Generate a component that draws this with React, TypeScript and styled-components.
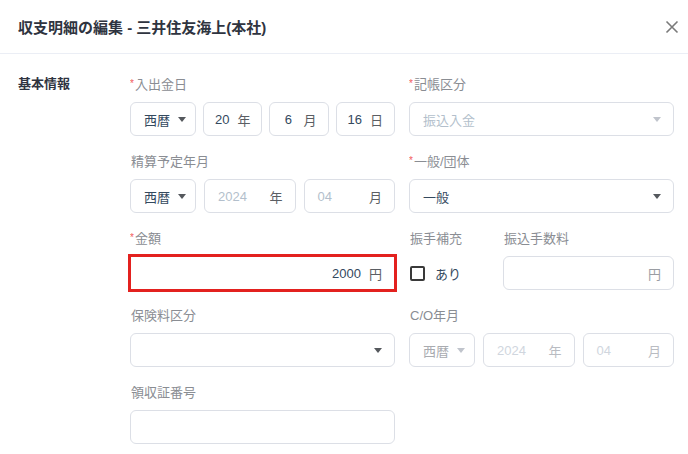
import styled, { createGlobalStyle } from "styled-components";

const GlobalStyle = createGlobalStyle`
  body {
    margin: 0;
    background: #ffffff;
    font-family: "Liberation Sans", "Noto Sans CJK JP", sans-serif;
  }
`;

const App = () => {
  return (
    <Modal>
      <GlobalStyle />
      <Header>
        <h1>収支明細の編集 - 三井住友海上(本社)</h1>
        <Close aria-label="close">
          <svg width="14" height="14" viewBox="0 0 14 14">
            <path d="M1.5 1.5 L12.5 12.5 M12.5 1.5 L1.5 12.5" stroke="#7a7a7a" strokeWidth="1.6" />
          </svg>
        </Close>
      </Header>
      <Body>
        <SectionTitle>基本情報</SectionTitle>
        <Form>
          <Field>
            <Label required>入出金日</Label>
            <DateRow>
              <Select>
                <Value>西暦</Value>
                <Caret />
              </Select>
              <Box centered>
                <Num>20</Num>
                <Unit>年</Unit>
              </Box>
              <Box centered>
                <Num>6</Num>
                <Unit>月</Unit>
              </Box>
              <Box centered>
                <Num>16</Num>
                <Unit>日</Unit>
              </Box>
            </DateRow>
          </Field>
          <Field>
            <Label required>記帳区分</Label>
            <Select disabled>
              <Value placeholder>振込入金</Value>
              <Caret disabled />
            </Select>
          </Field>

          <Field>
            <Label>精算予定年月</Label>
            <MonthRow>
              <Select>
                <Value>西暦</Value>
                <Caret />
              </Select>
              <Box>
                <Value placeholder>2024</Value>
                <Unit>年</Unit>
              </Box>
              <Box>
                <Value placeholder>04</Value>
                <Unit>月</Unit>
              </Box>
            </MonthRow>
          </Field>
          <Field>
            <Label required>一般/団体</Label>
            <Select>
              <Value>一般</Value>
              <Caret />
            </Select>
          </Field>

          <Field>
            <Label required>金額</Label>
            <Box highlight align="end">
              <Num>2000</Num>
              <Unit>円</Unit>
            </Box>
          </Field>
          <SplitRow>
            <Field>
              <Label>振手補充</Label>
              <CheckRow>
                <CheckBox />
                <span>あり</span>
              </CheckRow>
            </Field>
            <Field>
              <Label>振込手数料</Label>
              <Box align="end">
                <Unit muted>円</Unit>
              </Box>
            </Field>
          </SplitRow>

          <Field>
            <Label>保険料区分</Label>
            <Select>
              <Value />
              <Caret />
            </Select>
          </Field>
          <Field>
            <Label>C/O年月</Label>
            <MonthRow>
              <Select disabled>
                <Value disabled>西暦</Value>
                <Caret disabled />
              </Select>
              <Box>
                <Value disabled placeholder>2024</Value>
                <Unit disabled>年</Unit>
              </Box>
              <Box>
                <Value disabled placeholder>04</Value>
                <Unit disabled>月</Unit>
              </Box>
            </MonthRow>
          </Field>

          <Field>
            <Label>領収証番号</Label>
            <Box />
          </Field>
        </Form>
      </Body>
    </Modal>
  );
};

const Modal = styled.div`
  width: 688px;
  height: 454px;
  background: #ffffff;
  overflow: hidden;
`;

const Header = styled.div`
  height: 54px;
  display: flex;
  align-items: center;
  justify-content: space-between;
  padding: 0 9px 0 18px;
  border-bottom: 1px solid #ebeef5;
  box-sizing: border-box;

  h1 {
    margin: 0;
    font-size: 15px;
    font-weight: 700;
    color: #2f3440;
  }
`;

const Close = styled.button`
  border: none;
  background: none;
  padding: 0;
  width: 14px;
  height: 14px;
  display: flex;
  cursor: pointer;
`;

const Body = styled.div`
  display: flex;
  padding: 20px 14px 0 18px;
`;

const SectionTitle = styled.div`
  width: 112px;
  flex-shrink: 0;
  font-size: 13px;
  font-weight: 700;
  color: #2f3440;
  line-height: 20px;
`;

const Form = styled.div`
  display: grid;
  grid-template-columns: 265px 265px;
  column-gap: 14px;
  row-gap: 15px;
`;

const Field = styled.div`
  display: flex;
  flex-direction: column;
  gap: 8px;
  min-width: 0;
`;

const Label = styled.div<{ required?: boolean }>`
  height: 20px;
  font-size: 13px;
  line-height: 20px;
  color: #8a8d93;
  white-space: nowrap;
  overflow: hidden;

  &::before {
    content: ${(p) => (p.required ? '"*"' : '""')};
    color: #f25b5b;
    font-size: 10px;
    vertical-align: 2px;
    margin-right: 1px;
  }
`;

const DateRow = styled.div`
  display: grid;
  grid-template-columns: 66px repeat(3, minmax(0, 1fr));
  gap: 7px;
`;

const MonthRow = styled.div`
  display: grid;
  grid-template-columns: 66px repeat(2, minmax(0, 1fr));
  gap: 8px;
`;

const SplitRow = styled.div`
  display: grid;
  grid-template-columns: 80px minmax(0, 1fr);
  column-gap: 14px;
`;

const Box = styled.div<{ centered?: boolean; align?: "end"; highlight?: boolean }>`
  height: 34px;
  min-width: 0;
  box-sizing: border-box;
  display: flex;
  align-items: center;
  justify-content: ${(p) =>
    p.centered ? "center" : p.align === "end" ? "flex-end" : "space-between"};
  gap: 8px;
  padding: ${(p) => (p.centered ? "0 4px" : "0 12px 0 13px")};
  border: 1px solid ${(p) => (p.highlight ? "#e3211f" : "#dcdfe6")};
  border-radius: ${(p) => (p.highlight ? "0" : "6px")};
  box-shadow: ${(p) => (p.highlight ? "0 0 0 2px #e3211f" : "none")};
  background: #ffffff;
  font-size: 13px;
`;

const Select = styled(Box)<{ disabled?: boolean }>`
  justify-content: space-between;
`;

const Value = styled.span<{ placeholder?: boolean; disabled?: boolean }>`
  font-size: 13px;
  color: ${(p) =>
    p.disabled
      ? p.placeholder
        ? "#d0d6de"
        : "#a9abb0"
      : p.placeholder
      ? "#b3bfcc"
      : "#34495e"};
  white-space: nowrap;
`;

const Num = styled.span`
  font-size: 13px;
  color: #34495e;
  min-width: 14px;
  text-align: center;
`;

const Unit = styled.span<{ disabled?: boolean; muted?: boolean }>`
  font-size: 13px;
  color: ${(p) => (p.disabled ? "#b9bcc2" : p.muted ? "#9a9da3" : "#5b5e63")};
`;

const Caret = styled.span<{ disabled?: boolean }>`
  width: 0;
  height: 0;
  border-left: 4.5px solid transparent;
  border-right: 4.5px solid transparent;
  border-top: 5px solid ${(p) => (p.disabled ? "#c0c4cc" : "#55585d")};
  flex-shrink: 0;
`;

const CheckRow = styled.label`
  height: 34px;
  display: flex;
  align-items: center;
  gap: 10px;
  padding-left: 1px;
  font-size: 13px;
  color: #34495e;
`;

const CheckBox = styled.span`
  width: 15px;
  height: 15px;
  box-sizing: border-box;
  border: 2px solid #3a3a3a;
  border-radius: 2px;
`;

export default App;
